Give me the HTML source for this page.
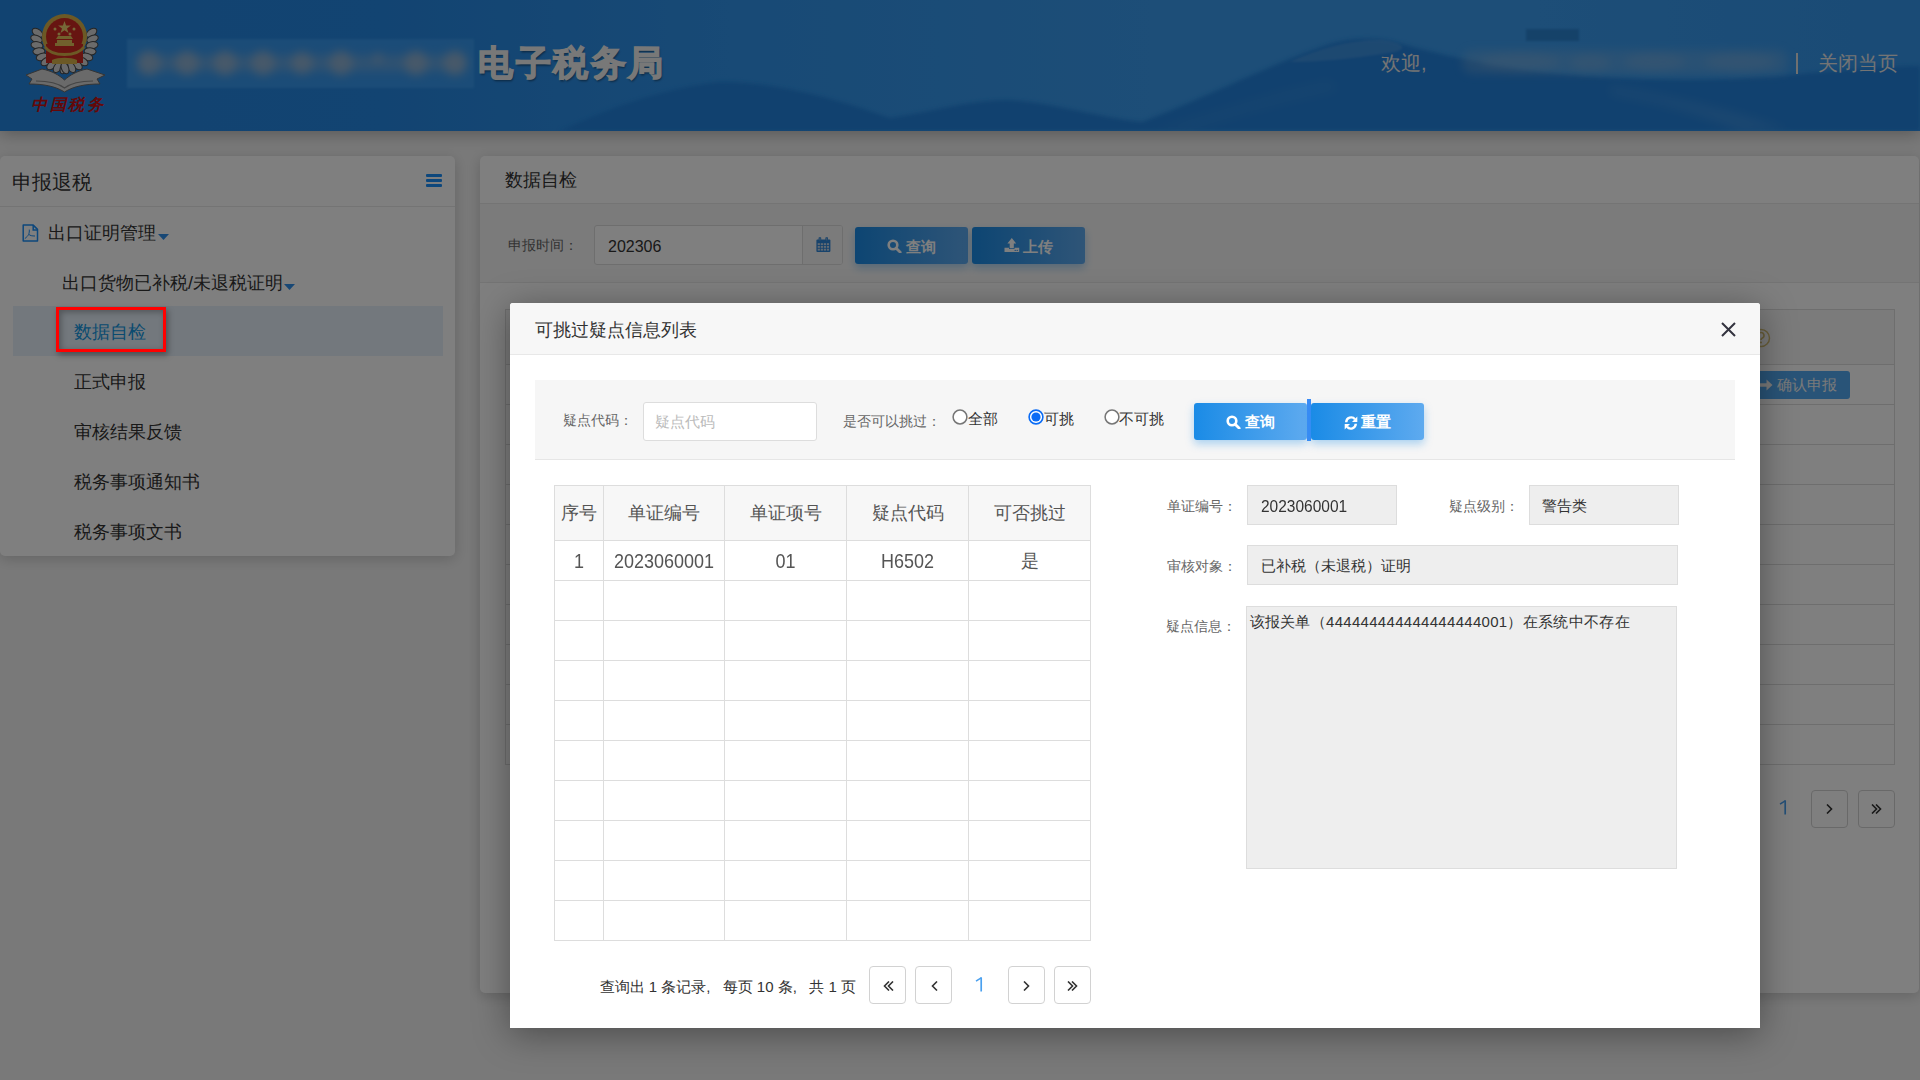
<!DOCTYPE html>
<html><head><meta charset="utf-8">
<style>
*{margin:0;padding:0;box-sizing:border-box}
html,body{width:1920px;height:1080px;overflow:hidden}
body{font-family:"Liberation Sans",sans-serif;background:#f3f3f3;position:relative;color:#333}
.abs{position:absolute}
.t{position:absolute;white-space:nowrap;line-height:1}
#hdr{left:0;top:0;width:1920px;height:131px;overflow:hidden;box-shadow:0 3px 16px rgba(0,0,0,.28)}
.panel{position:absolute;background:#fff;border-radius:5px;box-shadow:0 3px 14px rgba(0,0,0,.18)}
#side{left:0;top:156px;width:455px;height:400px}
#main{left:480px;top:156px;width:1439px;height:837px}
#overlay{left:0;top:0;width:1920px;height:1080px;background:rgba(0,0,0,.5)}
#modal{left:510px;top:303px;width:1250px;height:725px;background:#fff;border-radius:3px 3px 0 0;box-shadow:0 6px 36px rgba(0,0,0,.38)}
.btn{position:absolute;border-radius:3px;background:linear-gradient(90deg,#1a8be6,#5eaaef);box-shadow:0 4px 8px rgba(30,140,230,.35);color:#fff}
.pgb{position:absolute;width:37px;height:38px;border:1px solid #d2d2d2;border-radius:4px;background:#fff}
.tbl{position:absolute;border-collapse:collapse}
.tbl td{border:1px solid #ddd;text-align:center;padding:0;font-size:18px;color:#555}
.ro{position:absolute;background:#eee;border:1px solid #ddd}
.lbl{font-size:14px;color:#666!important}
</style></head><body>
<!-- HEADER -->
<div id="hdr" class="abs">
<svg width="1920" height="131" style="position:absolute;left:0;top:0">
<defs>
<linearGradient id="sky" x1="0" y1="0" x2="1" y2="0"><stop offset="0" stop-color="#2386e2"/><stop offset=".2" stop-color="#2588e4"/><stop offset=".38" stop-color="#3094ec"/><stop offset=".6" stop-color="#3a9cf0"/><stop offset=".8" stop-color="#3a9cf0"/><stop offset="1" stop-color="#3496ec"/></linearGradient>
<linearGradient id="mt" x1="0" y1="0" x2="0" y2="1"><stop offset="0" stop-color="#3090e8"/><stop offset="1" stop-color="#2588e6"/></linearGradient>
<filter id="bl"><feGaussianBlur stdDeviation="1.2"/></filter>
<filter id="bl4" x="-5%" y="-50%" width="110%" height="200%"><feGaussianBlur stdDeviation="2.2"/></filter><filter id="bl2"><feGaussianBlur stdDeviation="6"/></filter><filter id="bl3" x="-50%" y="-50%" width="200%" height="200%"><feGaussianBlur stdDeviation="5"/></filter>
</defs>
<rect width="1920" height="131" fill="url(#sky)"/>
<path d="M560 131 C600 112 660 88 720 82 C780 82 840 100 890 118 C930 112 970 100 1007 100 C1050 102 1100 118 1142 122 C1200 100 1280 60 1330 44 C1350 38 1375 37 1395 42 C1430 52 1470 62 1540 72 C1620 80 1700 82 1780 76 C1840 70 1890 66 1920 66 L1920 131 Z" fill="#2082de" filter="url(#bl4)"/>

<path d="M1290 62 C1320 48 1350 40 1380 40 C1400 42 1410 48 1395 52 C1370 56 1330 62 1290 62Z" fill="#6ab0ee" opacity=".35" filter="url(#bl)"/>
<path d="M1610 86 C1680 98 1740 112 1790 131 L1740 131 C1700 114 1660 102 1610 94Z" fill="#6aaeea" opacity=".3" filter="url(#bl2)"/>

<path d="M1150 131 C1220 110 1280 90 1330 80 L1340 90 C1290 100 1230 118 1190 131Z" fill="#5ea8ea" opacity=".18" filter="url(#bl2)"/>
<!-- logo -->
<g>
<ellipse cx="37.5" cy="32.8" rx="3.6" ry="6" transform="rotate(-55 37.5 32.8)" fill="#d6d6d6" stroke="#4a4a4a" stroke-width="1"/>
<ellipse cx="91.5" cy="32.8" rx="3.6" ry="6" transform="rotate(55 91.5 32.8)" fill="#d6d6d6" stroke="#4a4a4a" stroke-width="1"/>
<ellipse cx="36.5" cy="39.0" rx="3.6" ry="6" transform="rotate(-68 36.5 39.0)" fill="#d6d6d6" stroke="#4a4a4a" stroke-width="1"/>
<ellipse cx="92.5" cy="39.0" rx="3.6" ry="6" transform="rotate(68 92.5 39.0)" fill="#d6d6d6" stroke="#4a4a4a" stroke-width="1"/>
<ellipse cx="37.0" cy="45.3" rx="3.6" ry="6" transform="rotate(-81 37.0 45.3)" fill="#d6d6d6" stroke="#4a4a4a" stroke-width="1"/>
<ellipse cx="92.0" cy="45.3" rx="3.6" ry="6" transform="rotate(81 92.0 45.3)" fill="#d6d6d6" stroke="#4a4a4a" stroke-width="1"/>
<ellipse cx="38.9" cy="51.4" rx="3.6" ry="6" transform="rotate(-94 38.9 51.4)" fill="#d6d6d6" stroke="#4a4a4a" stroke-width="1"/>
<ellipse cx="90.1" cy="51.4" rx="3.6" ry="6" transform="rotate(94 90.1 51.4)" fill="#d6d6d6" stroke="#4a4a4a" stroke-width="1"/>
<ellipse cx="42.1" cy="56.9" rx="3.6" ry="6" transform="rotate(-107 42.1 56.9)" fill="#d6d6d6" stroke="#4a4a4a" stroke-width="1"/>
<ellipse cx="86.9" cy="56.9" rx="3.6" ry="6" transform="rotate(107 86.9 56.9)" fill="#d6d6d6" stroke="#4a4a4a" stroke-width="1"/>
<ellipse cx="46.5" cy="61.4" rx="3.6" ry="6" transform="rotate(-120 46.5 61.4)" fill="#d6d6d6" stroke="#4a4a4a" stroke-width="1"/>
<ellipse cx="82.5" cy="61.4" rx="3.6" ry="6" transform="rotate(120 82.5 61.4)" fill="#d6d6d6" stroke="#4a4a4a" stroke-width="1"/>
<ellipse cx="51.8" cy="64.9" rx="3.6" ry="6" transform="rotate(-133 51.8 64.9)" fill="#d6d6d6" stroke="#4a4a4a" stroke-width="1"/>
<ellipse cx="77.2" cy="64.9" rx="3.6" ry="6" transform="rotate(133 77.2 64.9)" fill="#d6d6d6" stroke="#4a4a4a" stroke-width="1"/>
<ellipse cx="57.7" cy="67.2" rx="3.6" ry="6" transform="rotate(-146 57.7 67.2)" fill="#d6d6d6" stroke="#4a4a4a" stroke-width="1"/>
<ellipse cx="71.3" cy="67.2" rx="3.6" ry="6" transform="rotate(146 71.3 67.2)" fill="#d6d6d6" stroke="#4a4a4a" stroke-width="1"/>
<ellipse cx="64.0" cy="68.0" rx="3.6" ry="6" transform="rotate(-159 64.0 68.0)" fill="#d6d6d6" stroke="#4a4a4a" stroke-width="1"/>
<ellipse cx="65.0" cy="68.0" rx="3.6" ry="6" transform="rotate(159 65.0 68.0)" fill="#d6d6d6" stroke="#4a4a4a" stroke-width="1"/>
 <circle cx="64.5" cy="36.5" r="22.5" fill="#d9b24a"/>
 <circle cx="64.5" cy="36.5" r="18.5" fill="#cf2a22"/>
 <path d="M46 44 L46 63 L83 63 L83 44 Z" fill="#cf2a22"/>
 <path d="M45 47 C52 57 77 57 84 47" fill="none" stroke="#d9b24a" stroke-width="3"/>
 <path d="M52 60 C58 57 71 57 77 60 L77 64 L52 64Z" fill="#d9b24a"/>
 <path d="M55 46 h19 v-3 h-2 v-3 h-15 v3 h-2z" fill="#e2c35a"/>
 <path d="M56 39 h17 l-2 -3 h-13z" fill="#e2c35a"/>
 <path d="M64.5 21 l1.6 4.6 h4.8 l-3.9 2.9 1.5 4.6 -4 -2.9 -4 2.9 1.5 -4.6 -3.9 -2.9 h4.8z" fill="#ecd070"/>
 <circle cx="55" cy="29" r="1.5" fill="#ecd070"/><circle cx="74" cy="29" r="1.5" fill="#ecd070"/>
 <circle cx="59" cy="34" r="1.5" fill="#ecd070"/><circle cx="70" cy="34" r="1.5" fill="#ecd070"/>
 <path d="M26 75 L42 69 C52 71 59 75 64.5 80 C70 75 77 71 87 69 L105 75 L97 79 L100 84 C86 84 74 86 64.5 92 C55 86 43 84 29 84 L32 79 Z" fill="#d4d4d4" stroke="#6a6a6a" stroke-width="1"/>
 <path d="M36 81 C48 81 58 83 64.5 88 C71 83 81 81 93 81" fill="none" stroke="#8a8a8a" stroke-width="1.2"/>
</g>
<g fill="#c81010" font-family="Liberation Serif" font-size="16" font-style="italic" font-weight="bold"><text x="31" y="110" textLength="72" lengthAdjust="spacing">中国税务</text></g>
<!-- blurred site name -->
<rect x="127" y="39" width="347" height="49" fill="#3c9ef4" opacity=".75" filter="url(#bl)"/>
<g fill="#a4b8cc" filter="url(#bl3)" opacity=".8">
 <rect x="140" y="55" width="320" height="16" rx="8" opacity=".45"/>
 <ellipse cx="149" cy="63" rx="12" ry="12"/><ellipse cx="187" cy="63" rx="12" ry="12"/><ellipse cx="225" cy="63" rx="12" ry="12"/><ellipse cx="263" cy="63" rx="12" ry="12"/><ellipse cx="302" cy="63" rx="11" ry="11"/><ellipse cx="341" cy="63" rx="12" ry="12"/><ellipse cx="378" cy="58" rx="4" ry="5"/><ellipse cx="416" cy="63" rx="12" ry="12"/><ellipse cx="455" cy="63" rx="12" ry="12"/>
</g>
<!-- username blur -->
<rect x="1526" y="29" width="53" height="12" fill="#1262aa" opacity=".4" filter="url(#bl)"/>
<g fill="#8ab4dc" filter="url(#bl3)" opacity=".55">
 <rect x="1462" y="50" width="326" height="24" rx="10" opacity=".6"/>
 <ellipse cx="1520" cy="62" rx="40" ry="9"/><ellipse cx="1655" cy="62" rx="30" ry="9"/><ellipse cx="1740" cy="62" rx="35" ry="9"/><ellipse cx="1590" cy="63" rx="20" ry="8"/>
</g>
</svg>
<div class="t" style="left:478px;top:45px;font-size:35px;font-weight:bold;color:#f0f0f0;-webkit-text-stroke:1.3px #f0f0f0;letter-spacing:2.6px;text-shadow:1px 2px 2px rgba(0,0,0,.4)">电子税务局</div>
<div class="t" style="left:1381px;top:53px;font-size:20px;color:#e8e8e8">欢迎,</div>
<div class="abs" style="left:1796px;top:53px;width:2px;height:21px;background:#e0e0e0"></div>
<div class="t" style="left:1817.5px;top:53px;font-size:20px;color:#e8e8e8">关闭当页</div>
</div>
<!-- SIDEBAR -->
<div id="side" class="panel">
 <div class="t" style="left:12px;top:16px;font-size:20px;color:#333">申报退税</div>
 <div class="abs" style="left:426px;top:18px;width:16px;height:3px;background:#1a8ef8;border-radius:1px"></div>
 <div class="abs" style="left:426px;top:23px;width:16px;height:3px;background:#1a8ef8;border-radius:1px"></div>
 <div class="abs" style="left:426px;top:28px;width:16px;height:3px;background:#1a8ef8;border-radius:1px"></div>
 <div class="abs" style="left:0;top:50px;width:455px;height:1px;background:#e8e8e8"></div>
 <svg class="abs" style="left:22px;top:67.5px" width="17" height="19" viewBox="0 0 17 19"><path d="M1.2 1.1H11.2L15.5 5.4V16.9H1.2Z" fill="none" stroke="#1a8ef8" stroke-width="1.5" stroke-linejoin="round"/><path d="M11.2 1.1V6.1H15.6" fill="none" stroke="#1a8ef8" stroke-width="1.5"/><path d="M7.3 5.6C7.5 9.3 6.8 11.6 2.8 14.6M7 10.4C8 11.6 10 12 13 12" fill="none" stroke="#1a8ef8" stroke-width="1"/></svg>
 <div class="t" style="left:48px;top:68px;font-size:18px;color:#333">出口证明管理</div>
 <svg class="abs" style="left:158px;top:78px" width="11" height="6"><path d="M0 0h11L5.5 6z" fill="#2f8eea"/></svg>
 <div class="t" style="left:62px;top:118px;font-size:18px;color:#333">出口货物已补税/未退税证明</div>
 <svg class="abs" style="left:284px;top:128px" width="11" height="6"><path d="M0 0h11L5.5 6z" fill="#2f8eea"/></svg>
 <div class="abs" style="left:13px;top:150px;width:430px;height:50px;background:#e6f1fb"></div>
 <div class="t" style="left:74px;top:167px;font-size:18px;color:#1496e0">数据自检</div>
 <div class="t" style="left:74px;top:217px;font-size:18px;color:#333">正式申报</div>
 <div class="t" style="left:74px;top:267px;font-size:18px;color:#333">审核结果反馈</div>
 <div class="t" style="left:74px;top:317px;font-size:18px;color:#333">税务事项通知书</div>
 <div class="t" style="left:74px;top:367px;font-size:18px;color:#333">税务事项文书</div>
</div>

<!-- MAIN -->
<div id="main" class="panel">
 <div class="t" style="left:24.5px;top:15px;font-size:18px;color:#333">数据自检</div>
 <div class="abs" style="left:0;top:47px;width:1439px;height:80px;background:#f7f7f7;border-top:1px solid #e8e8e8;border-bottom:1px solid #e8e8e8"></div>
 <div class="t lbl" style="left:28px;top:81.5px;color:#555">申报时间：</div>
 <div class="abs" style="left:114px;top:69px;width:249px;height:40px;border:1px solid #ddd;border-radius:3px;background:#fff"></div>
 <div class="abs" style="left:322px;top:70px;width:40px;height:38px;border-left:1px solid #ddd;background:#f7f7f7;border-radius:0 2px 2px 0"></div>
 <div class="t" style="left:128px;top:83px;font-size:16px;color:#333">202306</div>
 <svg class="abs" style="left:335.5px;top:80.5px" width="15" height="16" viewBox="0 0 15 16"><rect x="0.4" y="2.4" width="14" height="12.6" rx="1" fill="#2f86d8"/><rect x="1.70" y="6.20" width="2.2" height="1.9" fill="#c4d4e4"/><rect x="4.75" y="6.20" width="2.2" height="1.9" fill="#c4d4e4"/><rect x="7.80" y="6.20" width="2.2" height="1.9" fill="#c4d4e4"/><rect x="10.85" y="6.20" width="2.2" height="1.9" fill="#c4d4e4"/><rect x="1.70" y="8.95" width="2.2" height="1.9" fill="#c4d4e4"/><rect x="4.75" y="8.95" width="2.2" height="1.9" fill="#c4d4e4"/><rect x="7.80" y="8.95" width="2.2" height="1.9" fill="#c4d4e4"/><rect x="10.85" y="8.95" width="2.2" height="1.9" fill="#c4d4e4"/><rect x="1.70" y="11.70" width="2.2" height="1.9" fill="#c4d4e4"/><rect x="4.75" y="11.70" width="2.2" height="1.9" fill="#c4d4e4"/><rect x="7.80" y="11.70" width="2.2" height="1.9" fill="#c4d4e4"/><rect x="10.85" y="11.70" width="2.2" height="1.9" fill="#c4d4e4"/><rect x="2.6" y="0.3" width="2.6" height="3.6" rx=".6" fill="#2f86d8"/><rect x="9.4" y="0.3" width="2.6" height="3.6" rx=".6" fill="#2f86d8"/><rect x="3.5" y="1.1" width="0.9" height="2.3" fill="#9ab8d4"/><rect x="10.3" y="1.1" width="0.9" height="2.3" fill="#9ab8d4"/></svg>
 <div class="btn" style="left:375px;top:71px;width:113px;height:37px"></div>
 <div class="btn" style="left:492px;top:71px;width:113px;height:37px"></div>
 <svg class="abs" style="left:407px;top:83px" width="15" height="14" viewBox="0 0 15 14"><circle cx="6" cy="6" r="4.3" fill="none" stroke="#fff" stroke-width="2.6"/><path d="M9.2 9.2L13.2 13.2" stroke="#fff" stroke-width="2.8" stroke-linecap="round"/></svg><div class="t" style="left:426px;top:83px;font-size:15px;color:#fff;font-weight:bold">查询</div><svg class="abs" style="left:523.5px;top:82px" width="16" height="15" viewBox="0 0 16 15"><path d="M7.8 0.1L12.2 5.5H9.8V10.2H5.7V5.5H3.4Z" fill="#fff"/><path d="M0.5 9.8H5V11H10.5V9.8H15.2V14H0.5Z" fill="#fff"/><circle cx="11.2" cy="12.4" r=".65" fill="#2a8ae8"/><circle cx="13.2" cy="12.4" r=".65" fill="#2a8ae8"/></svg><div class="t" style="left:543px;top:83px;font-size:15px;color:#fff;font-weight:bold">上传</div>
 <table class="tbl" style="left:25px;top:153px;width:1390px"><tr style="height:55px;background:#f7f7f7"><td></td></tr><tr style="height:40px"><td></td></tr><tr style="height:40px"><td></td></tr><tr style="height:40px"><td></td></tr><tr style="height:40px"><td></td></tr><tr style="height:40px"><td></td></tr><tr style="height:40px"><td></td></tr><tr style="height:40px"><td></td></tr><tr style="height:40px"><td></td></tr><tr style="height:40px"><td></td></tr><tr style="height:40px"><td></td></tr></table>
 <svg class="abs" style="left:1271px;top:172px" width="20" height="20" viewBox="0 0 20 20"><circle cx="10" cy="10" r="8.5" fill="none" stroke="#d4be74" stroke-width="1.5"/><path d="M7 7.5a3 3 0 1 1 4 2.8c-.8.4-1 .9-1 1.7" fill="none" stroke="#d4be74" stroke-width="1.6"/><circle cx="10" cy="14.5" r="1.1" fill="#d4be74"/></svg>
 <div class="abs" style="left:1250px;top:215px;width:120px;height:28px;background:#52a8f0;border-radius:3px"></div>
 <svg class="abs" style="left:1279px;top:223px" width="14" height="12" viewBox="0 0 14 12"><path d="M0 4.2H7.5V0.5L13.5 6L7.5 11.5V7.8H0z" fill="#f4f4f4"/></svg>
 <div class="t" style="left:1296.5px;top:221px;font-size:15px;color:#f4f4f4">确认申报</div>
 <svg class="abs" style="left:1299px;top:644px" width="9" height="15" viewBox="0 0 9 15"><path d="M6.2 0.5V14.5" stroke="#4aa0ef" stroke-width="1.7"/><path d="M6.6 0.6L1 4.2" stroke="#4aa0ef" stroke-width="1.5"/></svg>
 <div class="pgb" style="left:1331px;top:634px;height:38px"></div>
 <div class="pgb" style="left:1378px;top:634px;height:38px"></div>
 <svg class="abs" style="left:1346px;top:648px" width="11" height="10" viewBox="0 0 11 10"><path d="M1 0.5L5.5 5L1 9.5" fill="none" stroke="#333" stroke-width="1.6"/></svg>
 <svg class="abs" style="left:1391px;top:648px" width="11" height="10" viewBox="0 0 11 10"><path d="M1 0.5L5.5 5L1 9.5M5 0.5L9.5 5L5 9.5" fill="none" stroke="#333" stroke-width="1.6"/></svg>

</div>

<div id="overlay" class="abs"></div>

<!-- red annotation -->
<div class="abs" style="left:56px;top:307px;width:110px;height:45px;border:3px solid #ff0000;box-shadow:2px 3px 6px rgba(0,0,0,.35),inset 2px 2px 6px rgba(0,0,0,.3)"></div>

<!-- MODAL -->
<div id="modal" class="abs">
 <div class="abs" style="left:0;top:0;width:1250px;height:52px;background:#f7f7f7;border-bottom:1px solid #e8e8e8;border-radius:3px 3px 0 0"></div>
 <div class="t" style="left:25px;top:17.5px;font-size:18px;color:#333">可挑过疑点信息列表</div>
 <svg class="abs" style="left:1210px;top:18px" width="17" height="17" viewBox="0 0 17 17"><path d="M2 2L15 15M15 2L2 15" stroke="#33333f" stroke-width="2"/></svg>
 <div class="abs" style="left:25px;top:77px;width:1200px;height:80px;background:#f6f6f6;border-bottom:1px solid #e6e6e6"></div>
 <div class="t lbl" style="left:53px;top:110px;color:#555">疑点代码：</div>
 <div class="abs" style="left:133px;top:99px;width:174px;height:39px;border:1px solid #ddd;border-radius:3px;background:#fff"></div>
 <div class="t" style="left:145px;top:111px;font-size:15px;color:#bbb">疑点代码</div>
 <div class="t lbl" style="left:333px;top:111px;color:#555">是否可以挑过：</div>
 <svg class="abs" style="left:441.5px;top:106px" width="16" height="16"><circle cx="8" cy="8" r="6.9" fill="#fff" stroke="#767676" stroke-width="1.5"/></svg>
 <div class="t" style="left:458px;top:108px;font-size:15px;color:#333">全部</div>
 <svg class="abs" style="left:517.5px;top:106px" width="16" height="16"><circle cx="8" cy="8" r="6.9" fill="#fff" stroke="#0b6cf5" stroke-width="1.6"/><circle cx="8" cy="8" r="4.6" fill="#0b6cf5"/></svg>
 <div class="t" style="left:534px;top:108px;font-size:15px;color:#333">可挑</div>
 <svg class="abs" style="left:593.5px;top:106px" width="16" height="16"><circle cx="8" cy="8" r="6.9" fill="#fff" stroke="#767676" stroke-width="1.5"/></svg>
 <div class="t" style="left:609px;top:108px;font-size:15px;color:#333">不可挑</div>
 <div class="btn" style="left:684px;top:100px;width:113px;height:37px"></div>
 <div class="abs" style="left:797px;top:96px;width:3.8px;height:42px;background:#3a8cf6"></div>
 <div class="btn" style="left:801px;top:100px;width:113px;height:37px"></div>
 <svg class="abs" style="left:716px;top:112px" width="15" height="14" viewBox="0 0 15 14"><circle cx="6" cy="6" r="4.3" fill="none" stroke="#fff" stroke-width="2.6"/><path d="M9.2 9.2L13.2 13.2" stroke="#fff" stroke-width="2.8" stroke-linecap="round"/></svg><div class="t" style="left:734.5px;top:111px;font-size:15px;color:#fff;font-weight:bold">查询</div><svg class="abs" style="left:833.5px;top:112.5px" width="14" height="14" viewBox="0 0 14 14"><path d="M2.2 6.2A5 5 0 0 1 11 3.2" fill="none" stroke="#fff" stroke-width="2.4"/><path d="M13.3 0.6V6H8z" fill="#fff"/><path d="M11.8 7.8A5 5 0 0 1 3 10.8" fill="none" stroke="#fff" stroke-width="2.4"/><path d="M0.7 13.4V8H6z" fill="#fff"/></svg><div class="t" style="left:851px;top:111px;font-size:15px;color:#fff;font-weight:bold">重置</div>

 <table class="tbl" style="left:44px;top:182px;width:537px">
  <colgroup><col style="width:49px"><col style="width:121px"><col style="width:122px"><col style="width:122px"><col style="width:122px"></colgroup>
  <tr style="height:55px;background:#f7f7f7"><td>序号</td><td>单证编号</td><td>单证项号</td><td>疑点代码</td><td>可否挑过</td></tr>
  <tr style="height:40px"><td><span style="display:inline-block;transform:scaleY(1.1);transform-origin:50% 0">1</span></td><td><span style="display:inline-block;transform:scaleY(1.1);transform-origin:50% 0">2023060001</span></td><td><span style="display:inline-block;transform:scaleY(1.1);transform-origin:50% 0">01</span></td><td><span style="display:inline-block;transform:scaleY(1.1);transform-origin:50% 0">H6502</span></td><td>是</td></tr>
  <tr style="height:40px"><td></td><td></td><td></td><td></td><td></td></tr><tr style="height:40px"><td></td><td></td><td></td><td></td><td></td></tr><tr style="height:40px"><td></td><td></td><td></td><td></td><td></td></tr><tr style="height:40px"><td></td><td></td><td></td><td></td><td></td></tr><tr style="height:40px"><td></td><td></td><td></td><td></td><td></td></tr><tr style="height:40px"><td></td><td></td><td></td><td></td><td></td></tr><tr style="height:40px"><td></td><td></td><td></td><td></td><td></td></tr><tr style="height:40px"><td></td><td></td><td></td><td></td><td></td></tr><tr style="height:40px"><td></td><td></td><td></td><td></td><td></td></tr>
 </table>

 <div class="t lbl" style="left:657px;top:196px">单证编号：</div>
 <div class="ro" style="left:737px;top:182px;width:150px;height:40px"></div>
 <div class="t" style="left:751px;top:195px;font-size:15.5px;color:#333;transform:scaleY(1.1);transform-origin:0 0">2023060001</div>
 <div class="t lbl" style="left:939px;top:196px">疑点级别：</div>
 <div class="ro" style="left:1019px;top:182px;width:150px;height:40px"></div>
 <div class="t" style="left:1032px;top:195px;font-size:15px;color:#333">警告类</div>
 <div class="t lbl" style="left:657px;top:256px">审核对象：</div>
 <div class="ro" style="left:737px;top:242px;width:431px;height:40px"></div>
 <div class="t" style="left:751px;top:255px;font-size:15px;color:#333">已补税（未退税）证明</div>
 <div class="t lbl" style="left:656px;top:316px">疑点信息：</div>
 <div class="ro" style="left:736px;top:303px;width:431px;height:263px"></div>
 <div class="t" style="left:739.5px;top:311px;font-size:15px;color:#333;letter-spacing:0.3px">该报关单（444444444444444444001）在系统中不存在</div>

 <div class="t" style="left:89.5px;top:676px;font-size:15px;color:#333">查询出 1 条记录<span style="display:inline-block;width:16.5px">,</span>每页 10 条<span style="display:inline-block;width:16.5px">,</span>共 1 页</div>
 <div class="pgb" style="left:359px;top:663px"></div>
 <div class="pgb" style="left:405px;top:663px"></div>
 <svg class="abs" style="left:465px;top:674px" width="9" height="15" viewBox="0 0 9 15"><path d="M6.2 0.5V14.5" stroke="#4aa0ef" stroke-width="1.7"/><path d="M6.6 0.6L1 4.2" stroke="#4aa0ef" stroke-width="1.5"/></svg>
 <div class="pgb" style="left:498px;top:663px"></div>
 <div class="pgb" style="left:544px;top:663px"></div>
 <svg class="abs" style="left:372.5px;top:677.8px" width="11" height="10" viewBox="0 0 11 10"><path d="M6 0.5L1.5 5L6 9.5 M10 0.5L5.5 5L10 9.5" fill="none" stroke="#333" stroke-width="1.6"/></svg><svg class="abs" style="left:420.5px;top:677.8px" width="11" height="10" viewBox="0 0 11 10"><path d="M6 0.5L1.5 5L6 9.5" fill="none" stroke="#333" stroke-width="1.6"/></svg><svg class="abs" style="left:512.5px;top:677.8px" width="11" height="10" viewBox="0 0 11 10"><path d="M1 0.5L5.5 5L1 9.5" fill="none" stroke="#333" stroke-width="1.6"/></svg><svg class="abs" style="left:557px;top:677.8px" width="11" height="10" viewBox="0 0 11 10"><path d="M1 0.5L5.5 5L1 9.5 M5 0.5L9.5 5L5 9.5" fill="none" stroke="#333" stroke-width="1.6"/></svg>

</div>
</body></html>
